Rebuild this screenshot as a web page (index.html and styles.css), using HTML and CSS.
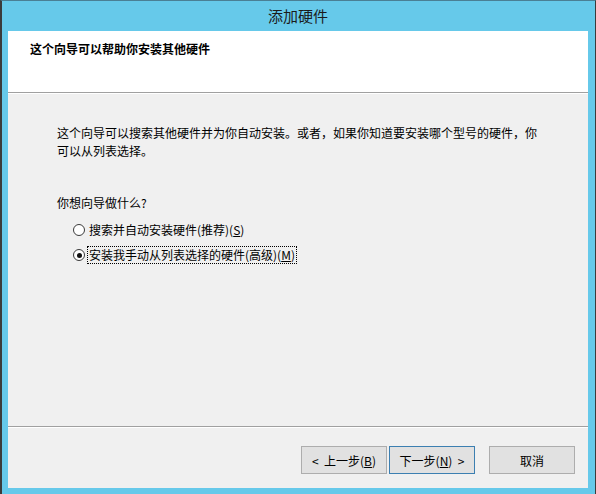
FILE: index.html
```html
<!DOCTYPE html>
<html lang="zh-CN">
<head>
<meta charset="utf-8">
<title>添加硬件</title>
<link rel="stylesheet" href="styles.css">
</head>
<body>
<div class="window">
  <div class="titlebar">添加硬件</div>
  <div class="client">
    <div class="header">
      <div class="header-title">这个向导可以帮助你安装其他硬件</div>
    </div>
    <div class="etch"></div>
    <div class="main">
      <p class="intro">这个向导可以搜索其他硬件并为你自动安装。或者，如果你知道要安装哪个型号的硬件，你可以从列表选择。</p>
      <p class="question">你想向导做什么?</p>
      <div class="options">
        <div class="option">
          <span class="radio"></span>
          <span class="label">搜索并自动安装硬件(推荐)(<u>S</u>)</span>
        </div>
        <div class="option">
          <span class="radio checked"></span>
          <span class="label focused">安装我手动从列表选择的硬件(高级)(<u>M</u>)</span>
        </div>
      </div>
    </div>
    <div class="etch"></div>
    <div class="footer">
      <div class="btn-pair">
        <button class="btn">&lt;&nbsp; 上一步(<u>B</u>)</button>
        <button class="btn default">下一步(<u>N</u>)&nbsp; &gt;</button>
      </div>
      <button class="btn">取消</button>
    </div>
  </div>
</div>
</body>
</html>
```
FILE: styles.css
```css
html, body {
  margin: 0;
  padding: 0;
  background: #66c9ea;
}
body {
  font-family: "Noto Sans CJK SC", "Noto Sans", sans-serif;
  font-size: 12px;
  color: #000;
}
.window {
  width: 596px;
  height: 494px;
  box-sizing: border-box;
  background: #66c9ea;
  border-left: 2px solid #3b3b3b;
  border-right: 1px solid #3b3b3b;
  border-top: 1px solid #4a7f95;
  padding: 0 7px 6px 6px;
  display: flex;
  flex-direction: column;
}
.titlebar {
  height: 30px;
  line-height: 30px;
  text-align: center;
  font-size: 15px;
  color: #1b1b1b;
  flex: none;
}
.client {
  flex: 1;
  display: flex;
  flex-direction: column;
  background: #f0f0f0;
}
.header {
  background: #fff;
  height: 61px;
  box-sizing: border-box;
  padding: 9px 0 0 22px;
  flex: none;
}
.header-title {
  font-weight: bold;
  line-height: 18px;
}
.etch {
  height: 1px;
  background: #a0a0a0;
  border-bottom: 1px solid #fff;
  flex: none;
}
.main {
  flex: 1;
  padding: 30px 40px 0 49px;
}
.intro {
  margin: 0;
  line-height: 18px;
}
.question {
  margin: 34px 0 0;
  line-height: 18px;
}
.options {
  margin-top: 9px;
  padding-left: 16px;
  display: flex;
  flex-direction: column;
  gap: 7px;
}
.option {
  display: flex;
  align-items: center;
  height: 18px;
}
.radio {
  width: 12px;
  height: 12px;
  border: 1px solid #3a3a3a;
  border-radius: 50%;
  background: #fff;
  box-sizing: border-box;
  position: relative;
  flex: none;
  margin-right: 2px;
}
.radio.checked::after {
  content: "";
  position: absolute;
  left: 2.5px;
  top: 2.5px;
  width: 5px;
  height: 5px;
  border-radius: 50%;
  background: #111;
}
.label {
  line-height: 16px;
  padding: 0 1px;
  border: 1px dotted transparent;
}
.label.focused {
  border-color: #000;
}
.footer {
  height: 60px;
  box-sizing: border-box;
  padding: 18px 13px 0 0;
  display: flex;
  justify-content: flex-end;
  align-items: flex-start;
  gap: 14px;
  flex: none;
}
.btn-pair {
  display: flex;
  gap: 2px;
}
.btn {
  width: 86px;
  height: 28px;
  background: #e1e1e1;
  border: 1px solid #adadad;
  font-family: "Noto Sans CJK SC", "Noto Sans", sans-serif;
  font-size: 12px;
  color: #000;
  padding: 0;
  margin: 0;
}
.btn.default {
  border-color: #3c7fb1;
}
```
